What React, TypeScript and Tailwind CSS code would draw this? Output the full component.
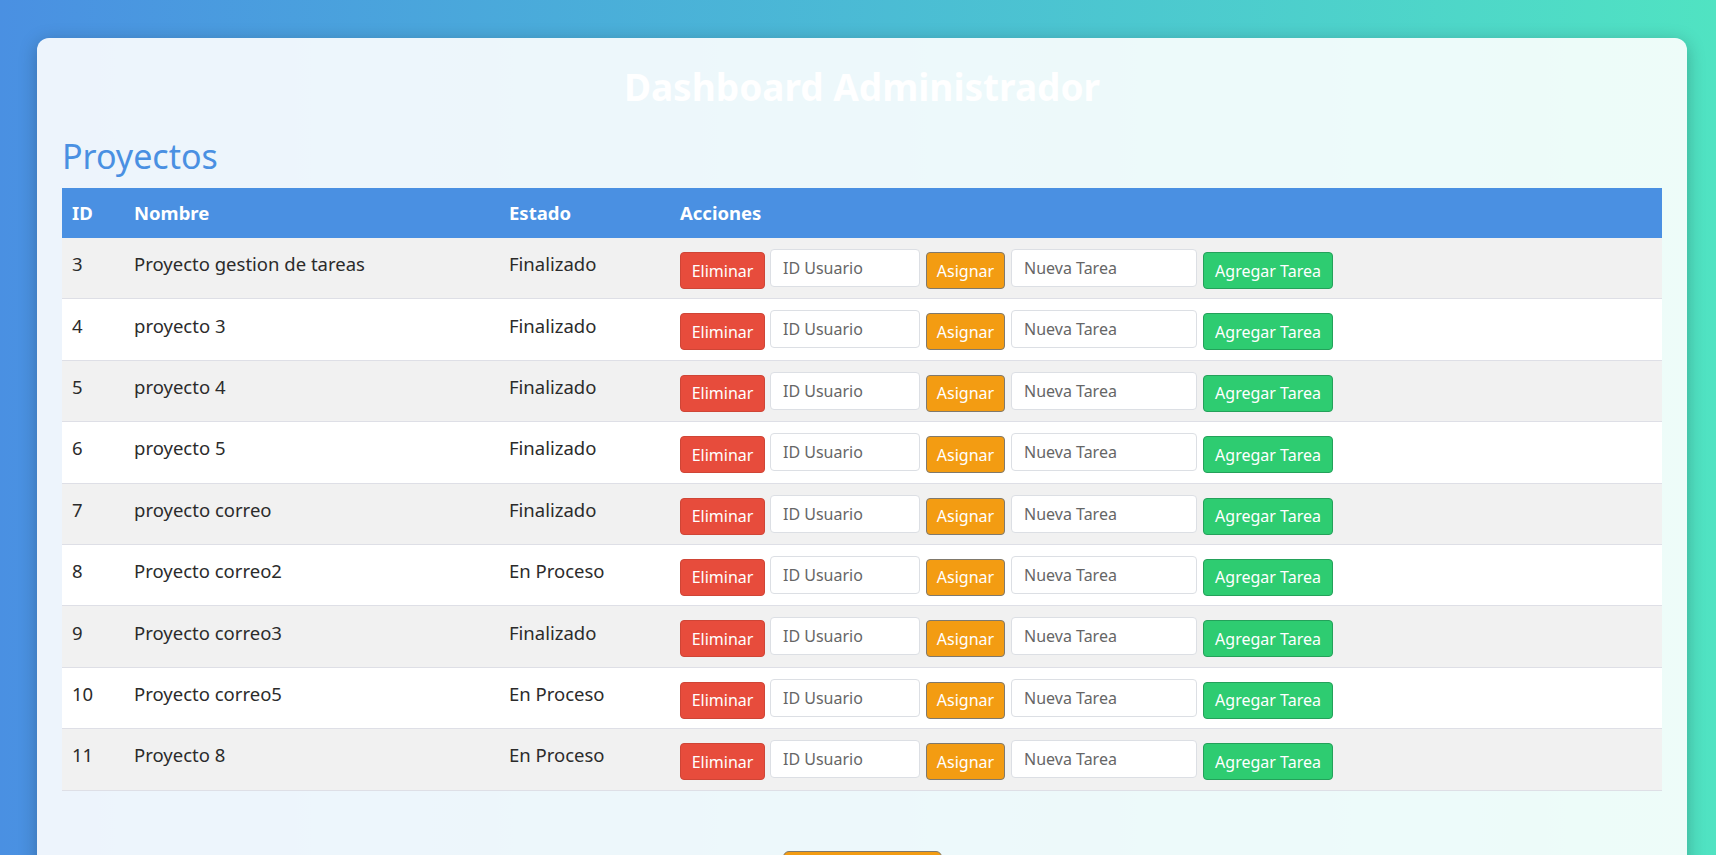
import React from "react";

type Row = { id: number; nombre: string; estado: string };

const rows: Row[] = [
  { id: 3, nombre: "Proyecto gestion de tareas", estado: "Finalizado" },
  { id: 4, nombre: "proyecto 3", estado: "Finalizado" },
  { id: 5, nombre: "proyecto 4", estado: "Finalizado" },
  { id: 6, nombre: "proyecto 5", estado: "Finalizado" },
  { id: 7, nombre: "proyecto correo", estado: "Finalizado" },
  { id: 8, nombre: "Proyecto correo2", estado: "En Proceso" },
  { id: 9, nombre: "Proyecto correo3", estado: "Finalizado" },
  { id: 10, nombre: "Proyecto correo5", estado: "En Proceso" },
  { id: 11, nombre: "Proyecto 8", estado: "En Proceso" },
];

export default function App() {
  return (
    <div
      className="min-h-screen bg-linear-to-r from-[#4a90e2] to-[#50e3c2] pt-[38px] pb-[40px]"
      style={{ fontFamily: '"Noto Sans", "Open Sans", sans-serif' }}
    >
      <div className="ml-[37px] w-[1650px] rounded-[12px] bg-white/90 shadow-[0_4px_18px_rgba(0,0,0,0.25)] px-[25px] pt-[27px] pb-[30px]">
        <h1 className="text-center text-[37px] leading-[43px] font-bold text-white">
          Dashboard Administrador
        </h1>
        <h2 className="mt-[31px] text-[34px] leading-[35px] text-[#4a90e2]">Proyectos</h2>
        <div className="mt-[14px] w-[1600px]">
          <div className="flex h-[50px] items-center bg-[#4a90e2] text-[18.5px] font-bold text-white">
            <div className="w-[62px] pl-[10px]">ID</div>
            <div className="w-[375px] pl-[10px]">Nombre</div>
            <div className="w-[171px] pl-[10px]">Estado</div>
            <div className="flex-1 pl-[10px]">Acciones</div>
          </div>
          {rows.map((r, i) => (
            <div
              key={r.id}
              className={
                "flex h-[61.4px] border-b border-[#dedfe6] text-[18.5px] text-[#2b2b2b] " +
                (i % 2 === 0 ? "bg-[#f1f1f1]" : "bg-white")
              }
            >
              <div className="flex w-[62px] items-center pb-[8px] pl-[10px]">{r.id}</div>
              <div className="flex w-[375px] items-center pb-[8px] pl-[10px]">{r.nombre}</div>
              <div className="flex w-[171px] items-center pb-[8px] pl-[10px]">{r.estado}</div>
              <div className="flex flex-1 items-start pt-[11px] pl-[10px] text-[16px]">
                <button className="mt-[3px] h-[37px] w-[85px] rounded-[4px] border border-[#cf4536] bg-[#e74c3c] text-white">
                  Eliminar
                </button>
                <input
                  className="ml-[5px] h-[38px] w-[150px] rounded-[4px] border border-[#dcdfe4] bg-white pl-[12px] text-[16px] text-[#333] placeholder:text-[#666] outline-none"
                  placeholder="ID Usuario"
                />
                <button className="mt-[3px] ml-[6px] h-[37px] w-[79px] rounded-[4px] border border-[#80796c] bg-[#f39c12] text-white">
                  Asignar
                </button>
                <input
                  className="ml-[6px] h-[38px] w-[186px] rounded-[4px] border border-[#dcdfe4] bg-white pl-[12px] text-[16px] text-[#333] placeholder:text-[#666] outline-none"
                  placeholder="Nueva Tarea"
                />
                <button className="mt-[3px] ml-[6px] h-[37px] w-[130px] rounded-[4px] border border-[#24a15a] bg-[#2ecc71] text-white">
                  Agregar Tarea
                </button>
              </div>
            </div>
          ))}
        </div>
        <div className="mt-[60px] flex justify-center">
          <button className="h-[42px] w-[159px] rounded-[6px] border border-[#80796c] bg-[#f39c12] text-[16px] text-white">
            Cerrar Sesión
          </button>
        </div>
      </div>
    </div>
  );
}
